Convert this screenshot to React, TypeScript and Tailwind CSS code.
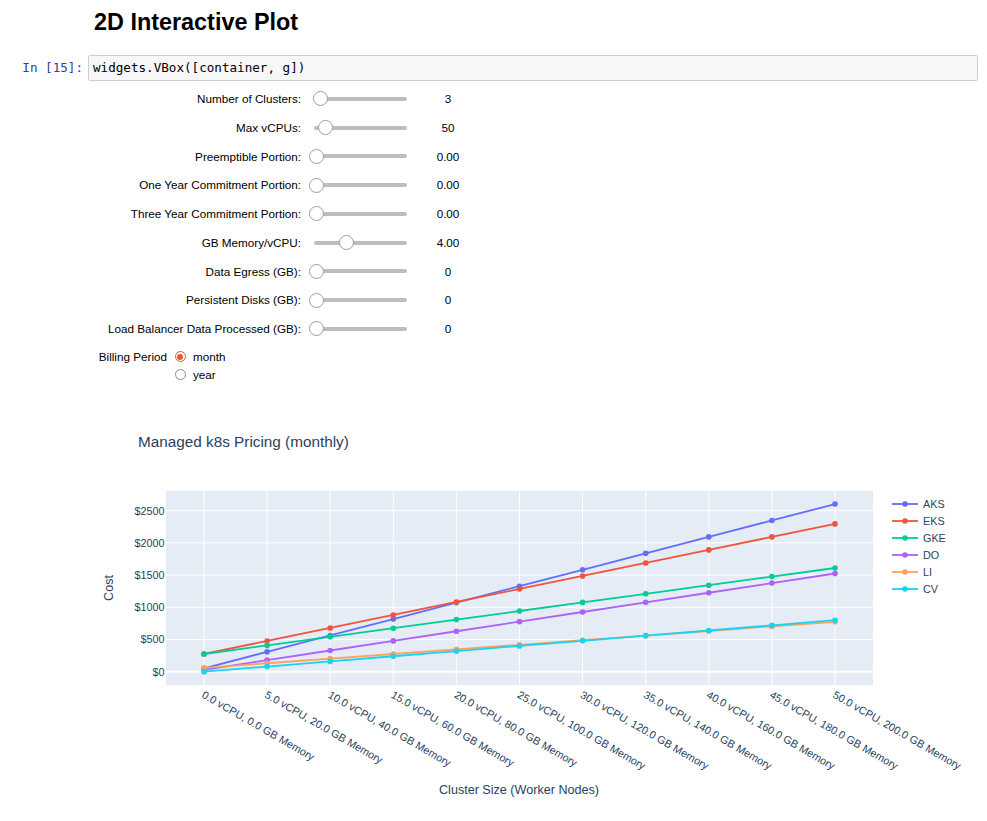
import React from "react";

const sliders = [
  { label: "Number of Clusters:", pos: 320, value: "3" },
  { label: "Max vCPUs:", pos: 325, value: "50" },
  { label: "Preemptible Portion:", pos: 316, value: "0.00" },
  { label: "One Year Commitment Portion:", pos: 316, value: "0.00" },
  { label: "Three Year Commitment Portion:", pos: 316, value: "0.00" },
  { label: "GB Memory/vCPU:", pos: 346, value: "4.00" },
  { label: "Data Egress (GB):", pos: 316, value: "0" },
  { label: "Persistent Disks (GB):", pos: 316, value: "0" },
  { label: "Load Balancer Data Processed (GB):", pos: 316, value: "0" },
];

const traces = [
  { name: "AKS", color: "#636efa", f: (x: number) => 53 + 51 * x },
  { name: "EKS", color: "#ef553b", f: (x: number) => 275 + 40.4 * x },
  { name: "GKE", color: "#00cc96", f: (x: number) => 275 + 26.7 * x },
  { name: "DO", color: "#ab63fa", f: (x: number) => 30 + 29.9 * x },
  { name: "LI", color: "#ffa15a", f: (x: number) => 60 + 14.3 * x },
  { name: "CV", color: "#19d3f3", f: (x: number) => 16 * x },
];

const X0 = 204;
const DX = 63.1;
const yv = (v: number) => 671.7 - v * 0.0644;
const FONT = "'Liberation Sans', Arial, sans-serif";
const TXT = "#2a3f5f";

function Chart() {
  const idx = Array.from({ length: 11 }, (_, i) => i);
  return (
    <svg width={987} height={421} className="block" style={{ fontFamily: FONT }}>
      <g transform="translate(0,-400)">
        <text x={138} y={446.5} fontSize={15.3} fill={TXT}>
          Managed k8s Pricing (monthly)
        </text>
        <rect x={166} y={491} width={707} height={194} fill="#e5ecf6" />
        {idx.map((i) => (
          <line key={"v" + i} x1={X0 + i * DX} x2={X0 + i * DX} y1={491} y2={685} stroke="#fff" strokeWidth={1} />
        ))}
        {[0, 500, 1000, 1500, 2000, 2500].map((v) => (
          <g key={"h" + v}>
            <line x1={166} x2={873} y1={yv(v)} y2={yv(v)} stroke="#fff" strokeWidth={v === 0 ? 2 : 1} />
            <text x={164.5} y={yv(v) + 3.8} fontSize={10.8} fill={TXT} textAnchor="end">
              ${v}
            </text>
          </g>
        ))}
        {idx.map((i) => {
          const x = X0 + i * DX - 3;
          const y = 697;
          return (
            <text key={"t" + i} x={x} y={y} fontSize={10.8} fill={TXT} transform={`rotate(30 ${x} ${y})`}>
              {`${(i * 5).toFixed(1)} vCPU, ${(i * 20).toFixed(1)} GB Memory`}
            </text>
          );
        })}
        {traces.map((t) => {
          const pts = idx.map((i) => [X0 + i * DX, yv(t.f(i * 5))]);
          return (
            <g key={t.name}>
              <polyline points={pts.map((p) => p.join(",")).join(" ")} fill="none" stroke={t.color} strokeWidth={1.8} strokeLinejoin="round" />
              {pts.map((p, k) => (
                <circle key={k} cx={p[0]} cy={p[1]} r={2.8} fill={t.color} />
              ))}
            </g>
          );
        })}
        {traces.map((t, k) => {
          const y = 504 + k * 17;
          return (
            <g key={"l" + t.name}>
              <line x1={892} x2={918} y1={y} y2={y} stroke={t.color} strokeWidth={1.8} />
              <circle cx={905} cy={y} r={2.8} fill={t.color} />
              <text x={923} y={y + 3.8} fontSize={10.8} fill={TXT}>
                {t.name}
              </text>
            </g>
          );
        })}
        <text x={519} y={793.5} fontSize={12.6} fill={TXT} textAnchor="middle">
          Cluster Size (Worker Nodes)
        </text>
        <text x={112.5} y={588} fontSize={12.6} fill={TXT} textAnchor="middle" transform="rotate(-90 112.5 588)">
          Cost
        </text>
      </g>
    </svg>
  );
}

export default function App() {
  return (
    <div className="min-h-[821px] w-[987px] bg-white text-black" style={{ fontFamily: FONT }}>
      <div className="h-[45px] pl-[94px] pt-[6px] text-[23.4px] font-bold leading-[32px]">2D Interactive Plot</div>
      <div className="mt-[10px] flex h-[26px] items-center font-['DejaVu_Sans_Mono',monospace] text-[12.6px]">
        <div className="w-[88px] pr-[5px] text-right text-[#303f9f]">In [15]:</div>
        <div className="flex h-[26px] w-[890px] items-center rounded-[2px] border border-[#cfcfcf] bg-[#f7f7f7] pl-[4px]">
          widgets.VBox([container, g])
        </div>
      </div>
      <div className="mt-[3.6px] text-[11.7px]">
        {sliders.map((s) => (
          <div key={s.label} className="flex h-[28.75px] items-center">
            <div className="w-[301px] text-right">{s.label}</div>
            <div className="relative h-full w-[120px]">
              <div className="absolute left-[13px] top-[12.4px] h-[4px] w-[93px] rounded-sm bg-[#bdbdbd]" />
              <div
                className="absolute top-[6.9px] h-[15px] w-[15px] rounded-full border border-[#9e9e9e] bg-white"
                style={{ left: s.pos - 301 - 7.5 }}
              />
            </div>
            <div className="w-[54px] text-center">{s.value}</div>
          </div>
        ))}
        <div className="mt-[4.6px] flex">
          <div className="flex h-[18px] w-[167px] items-center justify-end">Billing Period</div>
          <div className="flex flex-col pl-[7.5px]">
            <div className="flex h-[18px] items-center">
              <div className="flex h-[11px] w-[11px] items-center justify-center rounded-full border border-[#e9572b]">
                <div className="h-[6px] w-[6px] rounded-full bg-[#e9572b]" />
              </div>
              <span className="ml-[7.5px]">month</span>
            </div>
            <div className="flex h-[18px] items-center">
              <div className="h-[11px] w-[11px] rounded-full border border-[#8a8a8a]" />
              <span className="ml-[7.5px]">year</span>
            </div>
          </div>
        </div>
      </div>
      <div className="mt-[16px]">
        <Chart />
      </div>
    </div>
  );
}
